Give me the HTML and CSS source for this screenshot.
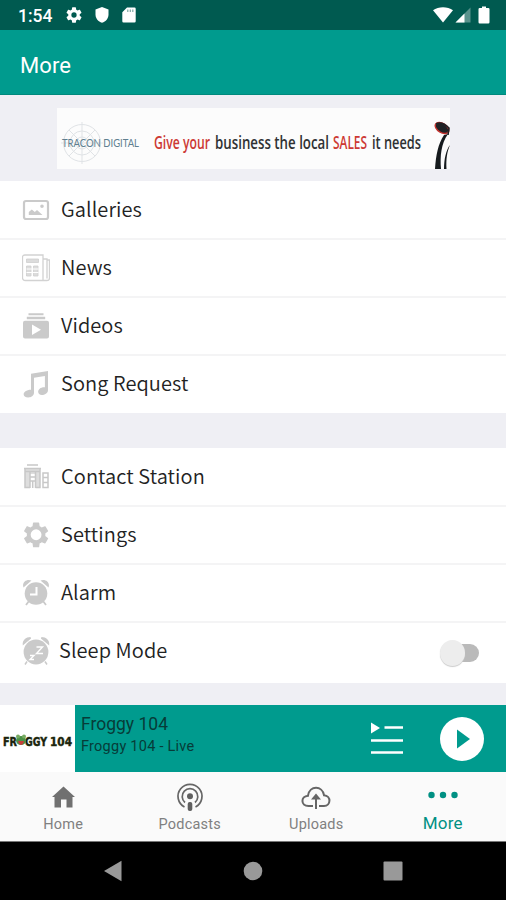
FILE: index.html
```html
<!DOCTYPE html>
<html lang="en">
<head>
<meta charset="utf-8">
<title>More</title>
<link rel="stylesheet" href="styles.css">
</head>
<body>
<div class="status">
  <span class="time">1:54</span>
  <svg class="st-gear" width="16" height="16" viewBox="2 2 20 20"><path fill="#fff" d="M19.14 12.94c.04-.3.06-.61.06-.94s-.02-.64-.07-.94l2.03-1.58a.49.49 0 0 0 .12-.61l-1.92-3.32a.49.49 0 0 0-.59-.22l-2.39.96a7 7 0 0 0-1.62-.94L14.4 2.81a.48.48 0 0 0-.48-.41h-3.84a.47.47 0 0 0-.47.41l-.36 2.54a7.3 7.3 0 0 0-1.62.94l-2.39-.96a.48.48 0 0 0-.59.22L2.74 8.87a.48.48 0 0 0 .12.61l2.03 1.58a6 6 0 0 0 0 1.88l-2.03 1.58a.49.49 0 0 0-.12.61l1.92 3.32c.12.22.37.29.59.22l2.39-.96c.5.38 1.03.7 1.62.94l.36 2.54c.05.24.24.41.48.41h3.84c.24 0 .44-.17.47-.41l.36-2.54a7 7 0 0 0 1.62-.94l2.39.96c.22.08.47 0 .59-.22l1.92-3.32a.47.47 0 0 0-.12-.61zM12 15.3a3.3 3.3 0 1 1 0-6.6 3.3 3.3 0 0 1 0 6.6z"/></svg>
  <svg class="st-shield" width="14" height="16" viewBox="0 0 14 16"><path fill="#fff" d="M7 0l6.500 2.500v5c0 4-2.700 7.200-6.500 8.300C3.200 14.700.5 11.500.5 7.500v-5z"/></svg>
  <svg class="st-sd" width="14" height="16" viewBox="0 0 14 16"><path fill="#fff" d="M5 .5h7.500a1.200 1.200 0 0 1 1.200 1.200v12.600a1.200 1.200 0 0 1-1.200 1.200h-11a1.200 1.200 0 0 1-1.200-1.200V5.200z"/><path stroke="#7da8a3" stroke-width="1.200" d="M5.800 2.500v2.500M8.300 2.500v2.500M10.800 2.500v2.500"/></svg>
  <span class="spacer"></span>
  <svg width="20" height="16" viewBox="0 0 20 16"><path fill="#fff" d="M0 3.200C5.500-.9 14.500-.9 20 3.200L10 15.500z"/></svg>
  <svg class="st-signal" width="16" height="16" viewBox="0 0 16 16"><path fill="#fff" fill-opacity=".35" d="M15.500.5v15H.5z"/><path fill="#fff" d="M9.500 6.500v9H.5z"/></svg>
  <svg class="st-battery" width="12" height="18" viewBox="0 0 12 18"><path fill="#fff" d="M4 .5h4V2h2.300a1.200 1.200 0 0 1 1.200 1.200v13.100a1.200 1.200 0 0 1-1.200 1.200H1.700a1.200 1.200 0 0 1-1.200-1.200V3.200A1.200 1.200 0 0 1 1.700 2H4z"/></svg>
</div>
<header class="title"><h1>More</h1></header>
<main>
  <div class="ad-area">
    <svg class="ad" width="393" height="61" viewBox="0 0 393 61">
      <rect width="393" height="61" fill="#fcfcfc"/>
      <g fill="none" stroke="#e0e3e6"><circle cx="25" cy="35" r="18.500"/><circle cx="25" cy="35" r="12"/><circle cx="25" cy="35" r="6"/><path d="M25 14v42M4 35h42M12 22l26 26M38 22L12 48"/></g>
      <text class="ad-brand" x="5" y="38.500" textLength="77" lengthAdjust="spacingAndGlyphs">TRACON DIGITAL</text>
      <g class="ad-copy" transform="translate(97 41) scale(1 1.330)">
        <text class="ad-red" x="0" y="0" textLength="56" lengthAdjust="spacingAndGlyphs">Give your</text>
        <text x="61" y="0" textLength="114" lengthAdjust="spacingAndGlyphs">business the local</text>
        <text class="ad-red" x="179" y="0" textLength="34" lengthAdjust="spacingAndGlyphs">SALES</text>
        <text x="218" y="0" textLength="49" lengthAdjust="spacingAndGlyphs">it needs</text>
      </g>
      <path fill="#161b1e" d="M391 26c-7 10-8 22-7 35h-6c1-14 3-25 9-34zM393 37c-3 7-4 14-3.500 24H387c0-10 2-19 6-24z"/>
      <ellipse cx="385" cy="20" rx="7.500" ry="4.500" transform="rotate(32 385 20)" fill="#202326" stroke="#c4312d" stroke-width="1.400"/>
      <path fill="none" stroke="#202326" stroke-width="1.600" d="M379 16c4-2 9 0 13 4l-1 7"/>
    </svg>
  </div>
  <section class="group">
    <div class="row"><svg class="icon" viewBox="0 0 28 28"><g fill="none" stroke="#cacaca"><rect x="2" y="5" width="24" height="18" rx="2" stroke-width="2.200"/></g><path fill="#cacaca" d="M6.800 19v-3l3-2.600 3 2.600 2.200-2 5.500 5zM20 8.500a1.800 1.800 0 1 1 0 3.600 1.800 1.800 0 0 1 0-3.600z"/></svg><span class="label">Galleries</span></div>
    <div class="row"><svg class="icon" viewBox="0 0 28 28"><g fill="none" stroke="#d2d2d2" stroke-width="1.300"><path d="M3 1h18v25.500H3.500Q.5 26.500.5 23.500V3.500Q.5 1 3 1zM21 5h4v19.500M25 6h2.500v18q0 2.500-2.500 2.500h-4.500"/></g><path fill="#dcdcdc" stroke="#cecece" stroke-width=".8" d="M4.500 5h12v3.500h-12zM4.500 12h4.500v10H4.500zM11.500 12H16v10h-4.500z"/><path stroke="#fff" d="M4.500 15h12M4.500 18.500h12"/></svg><span class="label">News</span></div>
    <div class="row"><svg class="icon" viewBox="0 0 28 28"><path fill="#cacaca" d="M6.500 1.200h15v2h-15zM4.800 4.700h18.400v2.500H4.800zM3 8.700h22a2 2 0 0 1 2 2V24.500a2 2 0 0 1-2 2H3a2 2 0 0 1-2-2V10.700a2 2 0 0 1 2-2z"/><path fill="#fff" d="M10 12.500v10.500l9-5.250z"/></svg><span class="label">Videos</span></div>
    <div class="row last"><svg class="icon" viewBox="0 0 28 28"><path fill="#cacaca" d="M9 3.700L26 1V20c0 3.500-3.500 5-6 5-5.800 0-5.200-8.200 2.900-7.800V6L12 7.700v15.100c0 3-3 4.700-5.800 4.700-7 0-5.800-7.800 2.800-7.800z"/></svg><span class="label">Song Request</span></div>
  </section>
  <section class="group second">
    <div class="row"><svg class="icon" viewBox="0 0 28 28"><path fill="#dedede" d="M3 6h15v5H3zM3 8h5v17H3zM14 8h4v17h-4z"/><g fill="none" stroke="#c8c8c8" stroke-width="1.500"><path d="M5 2h11M2 5.500h17M3 6v19M8 8v17M13.500 8v17M18 6v19M2.300 24.500H8M13.500 24.500H18.700M8 14h5.500M8 18h5.500M10.700 18v7M21 24.500V10h5v14.500zM21 14.500h5M21 19.500h5M3 8.500h15"/></g></svg><span class="label">Contact Station</span></div>
    <div class="row"><svg class="icon" viewBox="0 0 28 28"><path transform="translate(-1.400 -1.700) scale(1.290)" fill="#cacaca" d="M19.140 12.940c.04-.3.06-.61.06-.94s-.02-.64-.07-.94l2.030-1.580a.49.49 0 0 0 .12-.61l-1.920-3.320a.49.49 0 0 0-.59-.22l-2.390.96a7 7 0 0 0-1.620-.94L14.400 2.810a.48.48 0 0 0-.48-.41h-3.840a.47.47 0 0 0-.47.41l-.36 2.540a7.300 7.300 0 0 0-1.620.94l-2.390-.96a.48.48 0 0 0-.59.22L2.740 8.870a.48.48 0 0 0 .12.61l2.030 1.580a6 6 0 0 0 0 1.880l-2.030 1.580a.49.49 0 0 0-.12.61l1.920 3.320c.12.22.37.29.59.22l2.390-.96c.5.38 1.030.7 1.620.94l.36 2.540c.05.24.24.41.48.41h3.840c.24 0 .44-.17.47-.41l.36-2.540a7 7 0 0 0 1.620-.94l2.390.96c.22.08.47 0 .59-.22l1.920-3.320a.47.47 0 0 0-.12-.61zM12 16.200a4.200 4.200 0 1 1 0-8.400 4.200 4.200 0 0 1 0 8.400z"/></svg><span class="label">Settings</span></div>
    <div class="row"><svg class="icon" viewBox="0 0 28 28"><g fill="#cacaca"><circle cx="14" cy="14.500" r="11.300"/><path d="M1.500 8.500C-.5 3.500 4.500-.5 9.500 1.500zM26.500 8.500c2-5-3-9-8-7z"/></g><path fill="none" stroke="#cacaca" stroke-width="1.800" d="M7 22l-3 4M21 22l3 4"/><path fill="none" stroke="#fff" stroke-width="2" d="M14.500 8v7.500H8"/></svg><span class="label">Alarm</span></div>
    <div class="row sleep last"><svg class="icon" viewBox="0 0 28 28"><g fill="#cacaca"><circle cx="14" cy="15" r="12.400"/><path d="M.8 8.500C0 3 4 0 8.500 0l.6 1.500zM27.200 8.500C28 3 24 0 19.500 0l-.6 1.500z"/></g><path fill="none" stroke="#cacaca" stroke-width="1.500" d="M5 24.500l-2 3M23 24.500l2 3"/><path fill="none" stroke="#fff" stroke-width="1.400" d="M14.500 10h6l-6 6.500h6.500M8 18.500h4l-4 4h4"/></svg><span class="label">Sleep Mode</span><span class="switch"><span class="knob"></span></span></div>
  </section>
</main>
<section class="player">
  <div class="cover"><svg width="75" height="67" viewBox="0 0 75 67"><g class="froggy"><text x="3" y="40.500" textLength="14" lengthAdjust="spacingAndGlyphs">FR</text><text x="25" y="40.500" textLength="22" lengthAdjust="spacingAndGlyphs">GGY</text><text x="50" y="40.500" textLength="22" lengthAdjust="spacingAndGlyphs">104</text></g><ellipse cx="21" cy="35.500" rx="5" ry="4.500" fill="#4b9146"/><circle cx="18" cy="31.500" r="2" fill="#77ab61"/><circle cx="24" cy="31.500" r="2" fill="#77ab61"/><path fill="#c53e38" d="M18 36h6q-1 4-3 4t-3-4z"/></svg></div>
  <div class="track"><div class="station">Froggy 104</div><div class="show">Froggy 104 - Live</div></div>
  <svg class="queue" width="33" height="33" viewBox="0 0 33 33"><path fill="#fff" d="M0 .5v11L9 6z"/><path stroke="#fff" stroke-width="2.600" d="M13.500 5.500H32M0 18.500h32M0 30.500h32"/></svg>
  <svg class="play" width="44" height="44" viewBox="0 0 44 44"><circle cx="22" cy="22" r="22" fill="#fff"/><path fill="#009b8e" d="M17 12.500v19L30 22z"/></svg>
</section>
<nav class="tabs">
  <div class="tab"><svg width="30" height="30" viewBox="0 0 30 30"><path fill="#707070" d="M15.500 4.500L27 15h-2.500v10.500H18.500v-8h-5.500v8H6.500V15H4z"/></svg><span>Home</span></div>
  <div class="tab"><svg width="30" height="30" viewBox="0 0 30 30"><g fill="none" stroke="#666" stroke-width="1.700"><path d="M9.500 25a12 12 0 1 1 11 0M10 20.500a7.800 7.800 0 1 1 10 0"/></g><circle cx="15" cy="14.200" r="3" fill="#606060"/><rect x="12.700" y="20" width="4.600" height="9" rx="2" fill="#606060"/></svg><span>Podcasts</span></div>
  <div class="tab"><svg width="30" height="30" viewBox="0 0 30 30"><path fill="none" stroke="#666" stroke-width="2" d="M12 24H7.500c-8 0-8-9.800-.5-10.300C8.500 3.300 21.500 3.300 23 13.200c7.500.5 7 10.800 0 10.800h-5"/><path stroke="#666" stroke-width="2" d="M15 27V14"/><path fill="#666" d="M15 11.500l5 6H10z"/></svg><span>Uploads</span></div>
  <div class="tab active"><svg width="30" height="30" viewBox="0 0 30 30"><g fill="#009083"><circle cx="3.500" cy="13" r="3.200"/><circle cx="15" cy="13" r="3.200"/><circle cx="26.500" cy="13" r="3.200"/></g></svg><span>More</span></div>
</nav>
<footer class="system">
  <svg width="20" height="22" viewBox="0 0 20 22"><path fill="#999" d="M18.500.8v20.400L1 11z"/></svg>
  <svg width="20" height="20" viewBox="0 0 20 20"><circle cx="10" cy="10" r="9.300" fill="#999"/></svg>
  <svg width="20" height="20" viewBox="0 0 20 20"><rect x=".5" y=".5" width="19" height="19" rx="1" fill="#999"/></svg>
</footer>
</body>
</html>
```
FILE: styles.css
```css
* { box-sizing: border-box; }
body {
  margin: 0;
  width: 506px;
  height: 900px;
  overflow: hidden;
  display: flex;
  flex-direction: column;
  background: #efeff4;
  font-family: Roboto, sans-serif;
}
svg { display: block; flex: none; }
.status {
  height: 30px;
  flex: none;
  display: flex;
  align-items: center;
  padding: 0 16px 0 18px;
  background: #005a50;
}
.time { width: 48px; color: #fff; font-size: 17.5px; font-weight: 500; line-height: 30px; padding-top: 2px; }
.st-shield { margin-left: 13px; }
.st-sd { margin-left: 13px; }
.spacer { flex: 1; }
.st-signal { margin-left: 2px; }
.st-battery { margin-left: 7px; }
.title {
  height: 65px;
  flex: none;
  padding-left: 20px;
  background: #009b8e;
  border-bottom: 1px solid #00897d;
}
.title h1 { margin: 0; color: #fff; font-size: 22px; font-weight: 400; line-height: 71px; letter-spacing: .1px; }
main { height: 610px; flex: none; }
.ad-area { height: 86px; padding: 13px 0 0 57px; }
.ad-brand { font: 11px Lato, sans-serif; fill: #607f90; }
.ad-copy { font: 600 14px "Open Sans", sans-serif; fill: #303234; }
.ad-red { fill: #cd3934; }
.group { background: #fff; padding-top: 1px; }
.second { margin-top: 35px; }
.row {
  height: 58px;
  display: flex;
  align-items: center;
  padding-left: 22px;
  border-bottom: 2px solid #f4f4f5;
}
.last { height: 57px; border-bottom-color: #fff; }
.icon { width: 28px; height: 28px; }
.label {
  margin: -2px 0 0 11px;
  color: #222;
  font-family: "Noto Sans CJK SC", sans-serif;
  font-size: 20px;
  font-weight: 350;
  line-height: 28px;
  letter-spacing: .08px;
}
.sleep { height: 60px; padding-bottom: 2px; }
.sleep .label { margin-left: 9px; }
.switch {
  position: relative;
  width: 36px;
  height: 18px;
  margin: 4px 27px 0 auto;
  border-radius: 9px;
  background: #bababa;
}
.knob {
  position: absolute;
  left: -3px;
  top: -4px;
  width: 25px;
  height: 26px;
  border-radius: 50%;
  background: #ededed;
  box-shadow: 0 1px 1px #ccc;
}
.player { height: 67px; flex: none; display: flex; background: #009b8e; }
.cover { width: 75px; background: #fff; }
.froggy { font: 700 13px "DejaVu Sans Condensed", "DejaVu Sans", sans-serif; fill: #18200d; stroke: #25310e; stroke-width: .5px; }
.track { width: 295px; padding: 6px 0 0 6px; color: #073c38; }
.station { font-size: 17.5px; line-height: 26px; letter-spacing: 0; }
.show { font-size: 14.5px; line-height: 20px; letter-spacing: .25px; }
.queue { margin: 17px 0 0 1px; }
.play { margin: 12px 0 0 36px; }
.tabs {
  height: 70px;
  flex: none;
  display: grid;
  grid-template-columns: repeat(4, 1fr);
  background: #fafafa;
  border-bottom: 1px solid #777;
}
.tab {
  display: flex;
  flex-direction: column;
  align-items: center;
  padding-top: 10px;
  color: #808080;
  font-size: 14.5px;
  line-height: 26px;
  letter-spacing: .2px;
}
.active { color: #009083; font-size: 17px; line-height: 22px; }
.system {
  height: 58px;
  flex: none;
  display: flex;
  align-items: center;
  gap: 120px;
  padding-left: 103px;
  background: #000;
}
```
